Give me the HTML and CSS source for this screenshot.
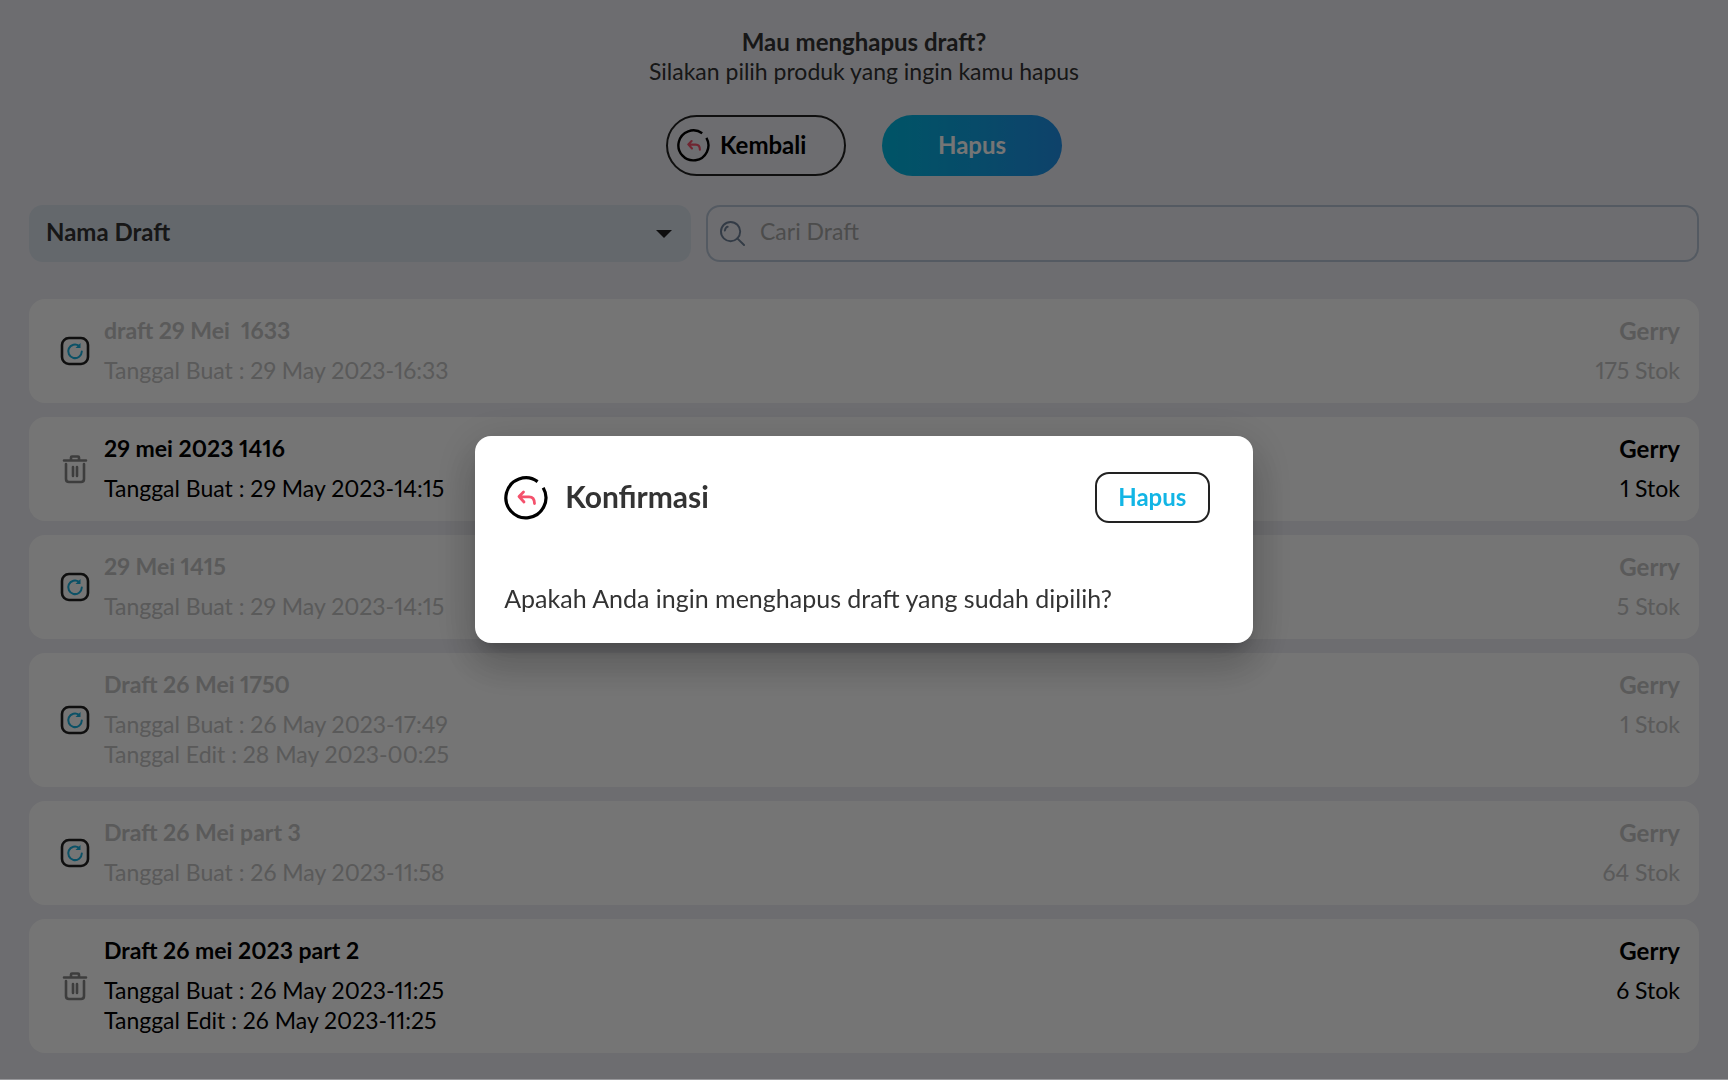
FILE: index.html
```html
<!DOCTYPE html>
<html lang="id">
<head>
  <meta charset="UTF-8" />
  <meta name="viewport" content="width=device-width, initial-scale=1.0" />
  <title>Hapus Draft</title>
  <link rel="stylesheet" href="styles.css">
</head>
<body>

  <!-- icon -->
  <svg class="sprite" aria-hidden="true">
    <symbol id="icon-back" viewBox="0 0 44 44">
      <path d="M33.6 5.6A20 20 0 1 0 39.2 11.8" fill="none" stroke="#000" stroke-width="3.2" />
      <path d="M19.5 16L15 20.5l5 5.5M15.5 20.8H25q5.500 0 5.500 6.700" fill="none" stroke="#f4516c" stroke-width="2.8" stroke-linecap="round" stroke-linejoin="round" />
    </symbol>
    <symbol id="icon-restore" viewBox="0 0 30 30">
      <rect x="2" y="2" width="26" height="26" rx="7" fill="none" stroke="#222" stroke-width="2.6" />
      <path d="M21.8 15.5A6.8 6.8 0 1 1 19 9.8" fill="none" stroke="#1ab0df" stroke-width="2" stroke-linecap="round" />
      <path d="M20.5 7v5h-5z" fill="#1ab0df" />
    </symbol>
    <symbol id="icon-trash" viewBox="0 0 30 30">
      <path d="M4 6.5h22M11 6V3.5q0-1 1-1h6q1 0 1 1V6M6 10v15q0 3 3 3h12q3 0 3-3V10M13 13v9M17 13v9" fill="none" stroke="#858585" stroke-width="2.6" stroke-linecap="round" />
    </symbol>
  </svg>

  <main class="page">
    <header class="header">
      <h1>Mau menghapus draft?</h1>
      <p>Silakan pilih produk yang ingin kamu hapus</p>
      <div class="actions">
        <button class="button button-back" type="button"><svg class="icon"><use href="#icon-back" /></svg>Kembali</button>
        <button class="button button-delete" type="button">Hapus</button>
      </div>
    </header>

    <form class="filter">
      <div class="select-box">
        <select class="select" aria-label="Urutkan">
          <option>Nama Draft</option>
        </select>
        <svg class="caret" viewBox="0 0 16 8"><path d="M0 0h16L8 8z" fill="#222" /></svg>
      </div>
      <label class="search">
        <svg class="icon-search" viewBox="0 0 26 26" fill="none" stroke="#6f8299" stroke-width="2" stroke-linecap="round" aria-hidden="true">
          <circle cx="11" cy="11" r="10" />
          <path d="M18 18l7 7M5 10q1-4 3-4" />
        </svg>
        <input type="search" placeholder="Cari Draft" aria-label="Cari Draft">
      </label>
    </form>

    <ul class="drafts">
      <li class="draft">
        <button class="toggle" type="button" aria-label="Batal pilih"><svg class="icon"><use href="#icon-restore" /></svg></button>
        <div class="info">
          <h2>draft 29 Mei&nbsp; 1633</h2>
          <p>Tanggal Buat : 29 May 2023-16:33</p>
        </div>
        <div class="info stock">
          <h2>Gerry</h2>
          <p>175 Stok</p>
        </div>
      </li>
      <li class="draft active">
        <button class="toggle" type="button" aria-label="Pilih"><svg class="icon"><use href="#icon-trash" /></svg></button>
        <div class="info">
          <h2>29 mei 2023 1416</h2>
          <p>Tanggal Buat : 29 May 2023-14:15</p>
        </div>
        <div class="info stock">
          <h2>Gerry</h2>
          <p>1 Stok</p>
        </div>
      </li>
      <li class="draft">
        <button class="toggle" type="button" aria-label="Batal pilih"><svg class="icon"><use href="#icon-restore" /></svg></button>
        <div class="info">
          <h2>29 Mei 1415</h2>
          <p>Tanggal Buat : 29 May 2023-14:15</p>
        </div>
        <div class="info stock">
          <h2>Gerry</h2>
          <p>5 Stok</p>
        </div>
      </li>
      <li class="draft">
        <button class="toggle" type="button" aria-label="Batal pilih"><svg class="icon"><use href="#icon-restore" /></svg></button>
        <div class="info">
          <h2>Draft 26 Mei 1750</h2>
          <p>Tanggal Buat : 26 May 2023-17:49</p>
          <p>Tanggal Edit : 28 May 2023-00:25</p>
        </div>
        <div class="info stock">
          <h2>Gerry</h2>
          <p>1 Stok</p>
        </div>
      </li>
      <li class="draft">
        <button class="toggle" type="button" aria-label="Batal pilih"><svg class="icon"><use href="#icon-restore" /></svg></button>
        <div class="info">
          <h2>Draft 26 Mei part 3</h2>
          <p>Tanggal Buat : 26 May 2023-11:58</p>
        </div>
        <div class="info stock">
          <h2>Gerry</h2>
          <p>64 Stok</p>
        </div>
      </li>
      <li class="draft active">
        <button class="toggle" type="button" aria-label="Pilih"><svg class="icon"><use href="#icon-trash" /></svg></button>
        <div class="info">
          <h2>Draft 26 mei 2023 part 2</h2>
          <p>Tanggal Buat : 26 May 2023-11:25</p>
          <p>Tanggal Edit : 26 May 2023-11:25</p>
        </div>
        <div class="info stock">
          <h2>Gerry</h2>
          <p>6 Stok</p>
        </div>
      </li>
    </ul>
  </main>

  <div class="overlay">
    <div class="dialog" role="dialog" aria-modal="true" aria-labelledby="dialog-title">
      <div class="dialog-head">
        <button class="dialog-back" type="button" aria-label="Kembali"><svg class="icon"><use href="#icon-back" /></svg></button>
        <h2 id="dialog-title">Konfirmasi</h2>
        <button class="dialog-delete" type="button">Hapus</button>
      </div>
      <p>Apakah Anda ingin menghapus draft yang sudah dipilih?</p>
    </div>
  </div>

</body>
</html>
```
FILE: styles.css
```css
* {
  box-sizing: border-box;
}

body {
  margin: 0;
  font-family: Lato, sans-serif;
  font-size: 23px;
  font-variant-numeric: proportional-nums;
  line-height: 30px;
  color: #333;
  background: #eeeef3;
}

h1, h2, p, ul {
  margin: 0;
  padding: 0;
}

h1, h2 {
  font-size: 24px;
  font-weight: bold;
  line-height: 29px;
}

button, input, select {
  font: inherit;
  color: inherit;
}

button {
  padding: 0;
  border: none;
  background: none;
  cursor: pointer;
}

.sprite {
  display: none;
}

.icon {
  display: block;
  width: 100%;
  height: 100%;
}

.page {
  min-height: 100vh;
  padding: 27px 29px 24px;
}

.header {
  text-align: center;
}

.actions {
  display: flex;
  justify-content: center;
  gap: 36px;
  margin-top: 29px;
}

.button {
  display: flex;
  align-items: center;
  justify-content: center;
  gap: 10px;
  width: 180px;
  height: 61px;
  padding-bottom: 2px;
  border-radius: 31px;
  font-size: 24px;
  font-weight: bold;
}

.button-back {
  justify-content: flex-start;
  padding: 0 0 1px 9px;
  border: 2px solid #222;
  color: #000;
}

.button-back .icon {
  width: 33px;
  height: 33px;
}

.button-delete {
  background: linear-gradient(90deg, #00b8e0, #2090e8);
  color: #fff;
}

.filter {
  display: grid;
  grid-template-columns: 2fr 3fr;
  gap: 15px;
  height: 57px;
  margin-top: 29px;
}

.select-box {
  position: relative;
}

.select {
  width: 100%;
  height: 100%;
  padding: 0 17px 4px;
  border: none;
  border-radius: 14px;
  background: #d9e2ec;
  font-size: 24px;
  font-weight: bold;
  appearance: none;
}

.caret {
  position: absolute;
  top: 25px;
  right: 19px;
  width: 16px;
  height: 8px;
  pointer-events: none;
}

.search {
  display: flex;
  align-items: center;
  gap: 15px;
  padding: 0 12px;
  border: 2px solid #b8c5d6;
  border-radius: 14px;
}

.icon-search {
  width: 25px;
  height: 25px;
}

.search input {
  flex: 1;
  padding: 0 0 6px;
  border: none;
  outline: none;
  background: none;
}

.search input::placeholder {
  color: #a6a6a6;
}

.drafts {
  display: flex;
  flex-direction: column;
  gap: 14px;
  margin-top: 37px;
  list-style: none;
}

.draft {
  display: flex;
  padding: 17px 19px 18px 31px;
  border-radius: 16px;
  background: #fff;
  color: #c4c4c4;
}

.draft.active {
  color: #000;
}

.toggle {
  align-self: center;
  width: 30px;
  height: 30px;
}

.info {
  margin-left: 14px;
}

.info h2 {
  margin-bottom: 10px;
  font-size: 23px;
}

.stock {
  margin-left: auto;
  text-align: right;
}

.stock h2 {
  font-size: 24px;
}

.overlay {
  position: fixed;
  inset: 0;
  display: flex;
  align-items: center;
  justify-content: center;
  border-bottom: 1px solid rgba(0, 0, 0, 0.36);
  background: rgba(0, 0, 0, 0.54) padding-box;
}

.dialog {
  width: 45%;
  padding: 36px 43px 30px 29px;
  border-radius: 16px;
  background: #fff;
  font-size: 25px;
  box-shadow: 0 11px 15px -7px rgba(0, 0, 0, 0.2), 0 24px 38px 3px rgba(0, 0, 0, 0.14), 0 9px 46px 8px rgba(0, 0, 0, 0.12);
}

.dialog-head {
  display: flex;
  align-items: center;
  gap: 17px;
  margin-bottom: 60px;
}

.dialog-head h2 {
  padding-bottom: 2px;
  font-size: 30px;
}

.dialog-back {
  width: 44px;
  height: 44px;
}

.dialog-delete {
  width: 115px;
  height: 51px;
  padding-bottom: 2px;
  margin-left: auto;
  border: 2px solid #222;
  border-radius: 14px;
  color: #12b5e5;
  font-size: 24px;
  font-weight: bold;
}
```
